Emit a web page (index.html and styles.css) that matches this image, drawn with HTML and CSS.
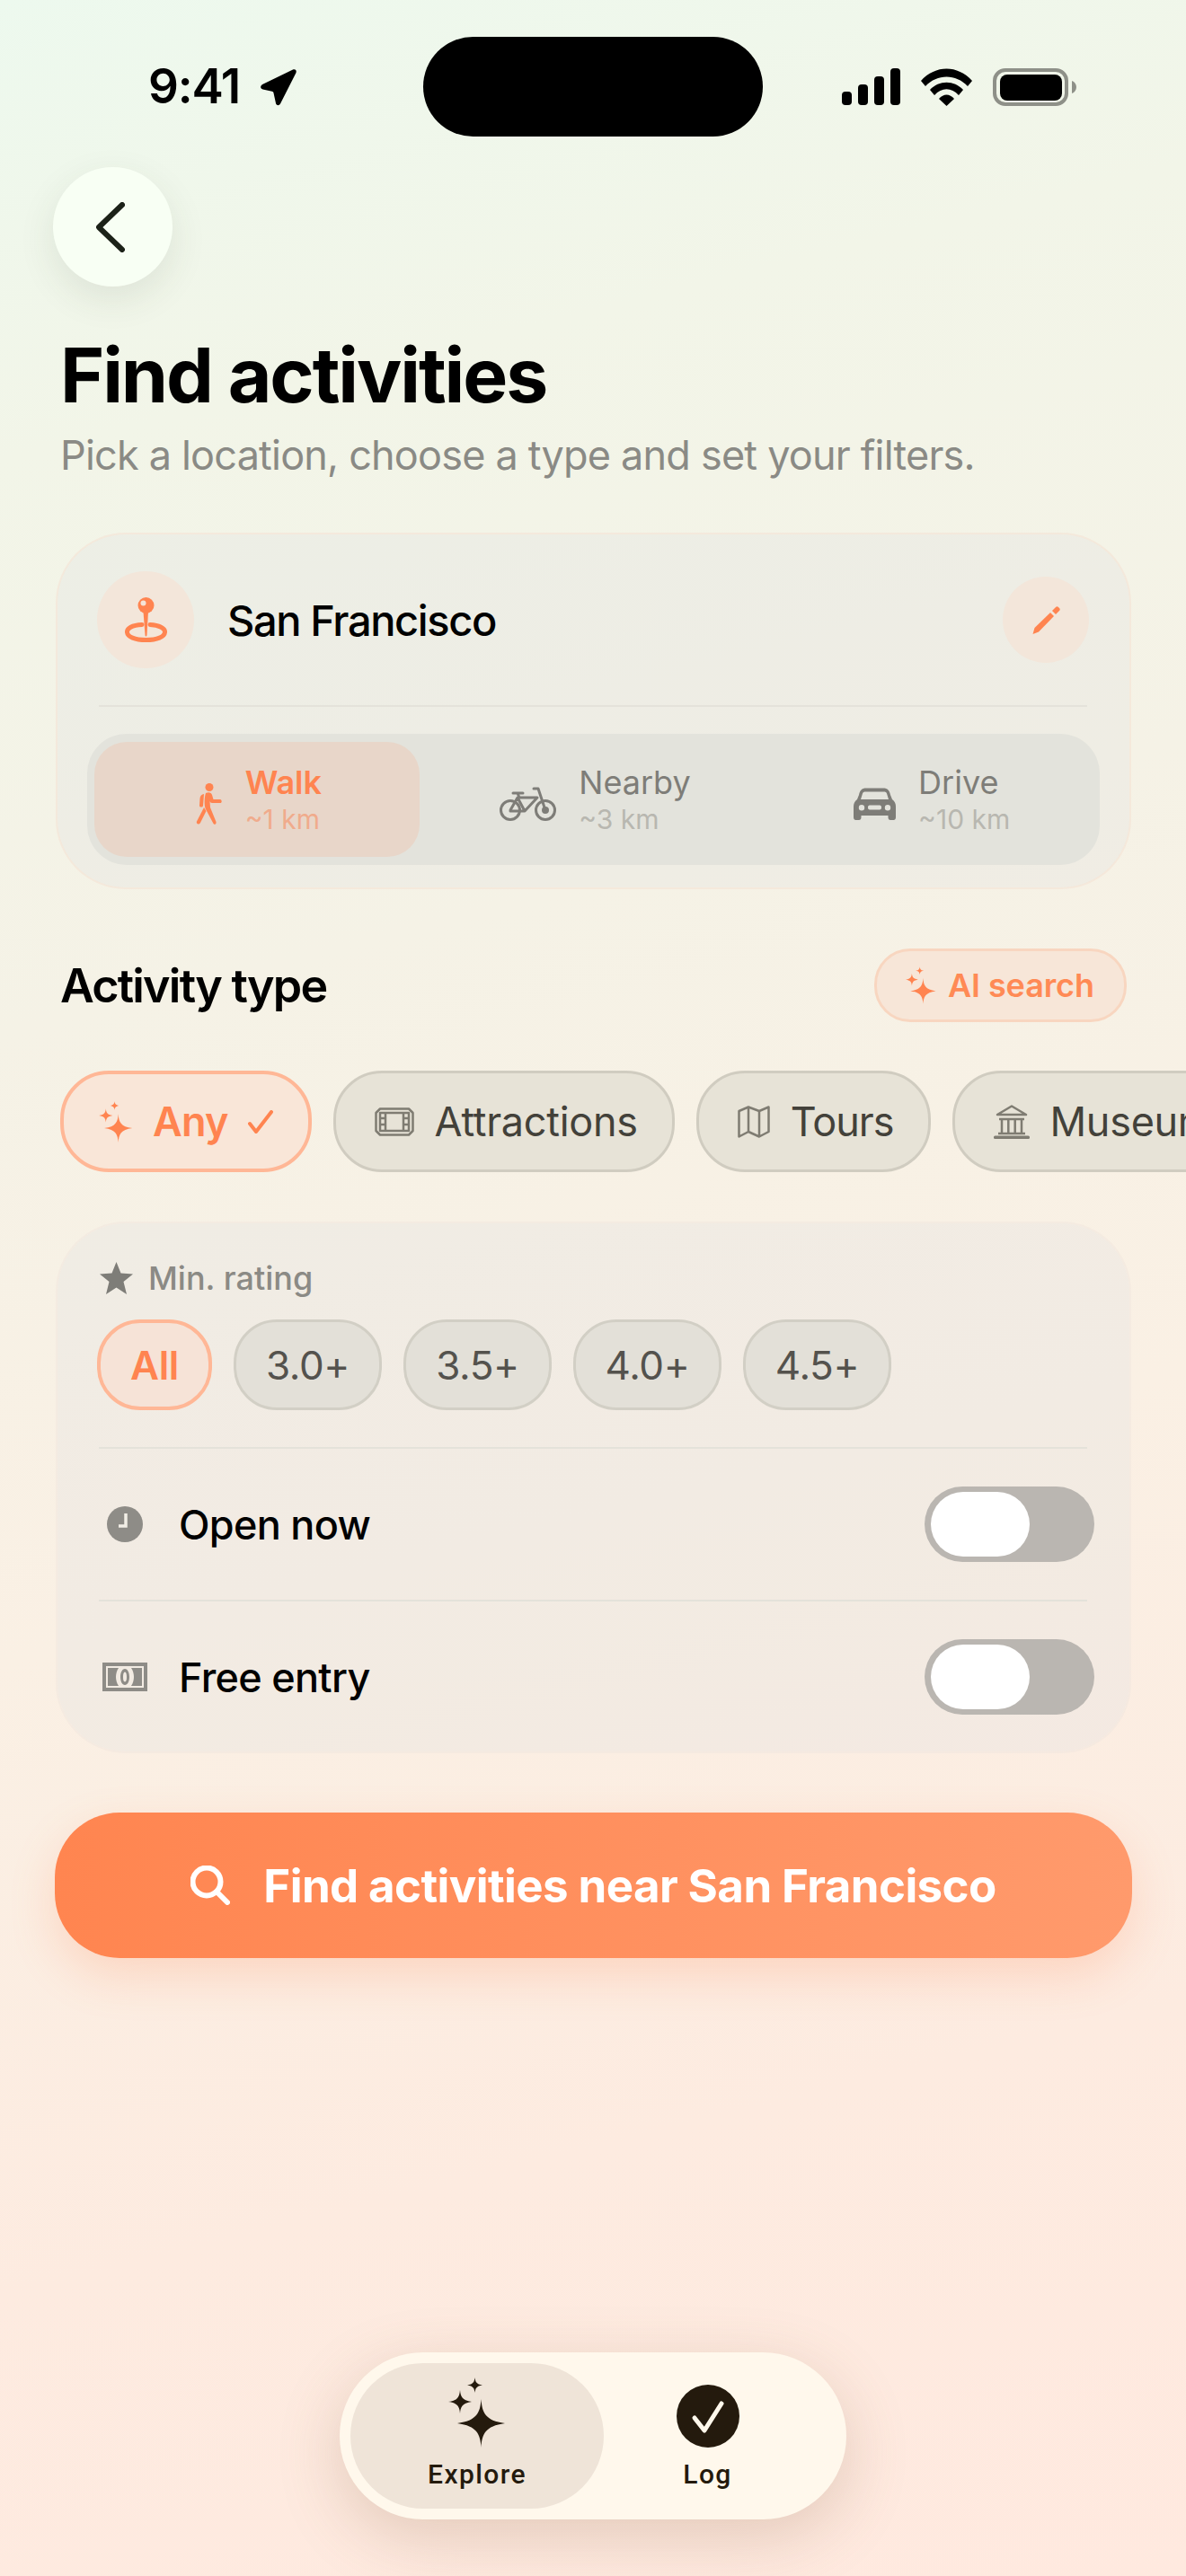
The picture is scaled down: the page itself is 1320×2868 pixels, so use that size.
FILE: index.html
```html
<!DOCTYPE html>
<html lang="en">

<head>
    <meta charset="UTF-8">
    <meta name="viewport" content="width=device-width, initial-scale=1.0">
    <title>Find activities</title>
    <link rel="stylesheet" href="styles.css">
</head>

<body>
    <!-- shared sparkle icon -->
    <svg class="defs" width="0" height="0">
        <symbol id="sparkles" viewBox="0 0 64 78">
            <path d="M36.500 24C37.500 39 41 48 63 51C41 54 37.500 63 36.500 78C35.500 63 32 54 10 51C32 48 35.500 39 36.500 24Z" />
            <path d="M13 14C13.700 21 15 25.500 26 27C15 28.500 13.700 33 13 40C12.300 33 11 28.500 0 27C11 25.500 12.300 21 13 14Z" />
            <path d="M29.500 0C30 4.500 31 7.500 38 8.500C31 9.500 30 12.500 29.500 17C29 12.500 28 9.500 21 8.500C28 7.500 29 4.500 29.500 0Z" />
        </symbol>
    </svg>

    <div class="screen">
        <div class="status-bar">
            <div class="status-left">
                <span class="time">9:41</span>
                <svg class="location-arrow" viewBox="0 0 42 42">
                    <path d="M3 18L37 1.500C39.500 .5 41.500 2.500 40.500 5L23 39.500C21.500 42 18.500 41.500 18 39L15.500 27.500C15.300 26.500 14.700 26 13.800 25.800L3.500 23.500C.5 22.800 .5 19.500 3 18Z" />
                </svg>
            </div>
            <div class="island"></div>
            <div class="status-right">
                <svg class="signal" viewBox="0 0 65 41">
                    <rect x="0" y="26" width="11" height="15" rx="4" />
                    <rect x="18" y="18" width="11" height="23" rx="4" />
                    <rect x="36" y="9" width="11" height="32" rx="4" />
                    <rect x="54" y="0" width="11" height="41" rx="4" />
                </svg>
                <svg class="wifi" viewBox="0 0 57 42">
                    <path d="M0 14C16 -4 41 -4 57 14L52 20C39 6 18 6 5 20Z" />
                    <path d="M10 24C20 13 37 13 47 24L42 30C34 21 23 21 15 30Z" />
                    <path d="M20 34C25 28 32 28 37 34L28.500 42Z" />
                </svg>
                <svg class="battery" viewBox="0 0 93 42">
                    <rect x="2" y="2" width="80" height="38" rx="12" fill="none" stroke="#8e9088" stroke-width="4" />
                    <rect x="8" y="7" width="69" height="29" rx="8" />
                    <path d="M88 14C91 15 93 18 93 21C93 24 91 27 88 28Z" fill="#8e9088" />
                </svg>
            </div>
        </div>

        <button class="back-btn">
            <svg viewBox="0 0 32 56">
                <path d="M29 3L3 28L29 53" />
            </svg>
        </button>

        <h1 class="title">Find activities</h1>
        <p class="subtitle">Pick a location, choose a type and set your filters.</p>

        <section class="card location-card">
            <div class="location-row">
                <div class="pin-circle">
                    <svg class="pin-icon" viewBox="0 0 47 50">
                        <path class="pin-ring" d="M19 30.500C8 31 2 34.500 2.500 39C3 44 11 47.500 23.500 47.500C36 47.500 44 44 44.500 39C45 34.500 38 31 28 30.500" />
                        <path d="M20.500 16H26L24.500 42C24.200 44 22.800 44 22.500 42Z" />
                        <circle cx="23.500" cy="9" r="9" />
                        <circle class="pin-hole" cx="20.500" cy="6.500" r="3" />
                    </svg>
                </div>
                <span class="location-name">San Francisco</span>
                <div class="edit-circle">
                    <svg class="edit-icon" viewBox="0 0 32 33">
                        <path d="M1.500 32L3.500 25L21 8L25 12L8 29.500Z" />
                        <path d="M23 6L27 2C28 1 29 1 30 2L31 3C32 4 32 5 31 6L27 10Z" />
                    </svg>
                </div>
            </div>
            <div class="divider"></div>
            <div class="segments">
                <div class="segment active">
                    <svg class="seg-icon walk-icon" viewBox="0 0 30 46">
                        <circle cx="15" cy="4.500" r="4.500" />
                        <path d="M11 11C14 9.500 17 10 18 13L19.500 18H27C29 18 29.500 22 27 22H18C16.500 22 16 21 15.500 20L16 27L22.500 43C23 46 20 47 19 44L11 29C9 25 9.500 15 11 11Z" />
                        <path d="M9 27L11.500 31L5 44C3 47 0 45 1 42.500Z" />
                        <path d="M9 12L8 25C7.800 27 4 27 4 25L4.500 17C4.700 14 6.500 12.500 9 12Z" />
                    </svg>
                    <div class="seg-text">
                        <span class="seg-name">Walk</span>
                        <span class="seg-dist">~1 km</span>
                    </div>
                </div>
                <div class="segment">
                    <svg class="seg-icon bike-icon" viewBox="0 0 63 38">
                        <circle cx="12" cy="26" r="10.500" />
                        <circle cx="51" cy="26" r="10.500" />
                        <path d="M12 26L20 12H42L28 27H12M20 12L28 27M38 2H43L51 26M15 7H26M20 7L22 12" />
                        <circle class="bike-hub" cx="51" cy="26" r="2.500" />
                    </svg>
                    <div class="seg-text">
                        <span class="seg-name">Nearby</span>
                        <span class="seg-dist">~3 km</span>
                    </div>
                </div>
                <div class="segment">
                    <svg class="seg-icon car-icon" viewBox="0 0 47 36">
                        <path fill-rule="evenodd" d="M6 8C7 3 9 .5 14 .5H33C38 .5 40 3 41 8L43 13C46 15 47 18 47 21V33C47 35 46 36 44.500 36H41C39.500 36 38.500 35 38.500 33V31H8.500V33C8.500 35 7.500 36 6 36H2.500C1 36 0 35 0 33V21C0 18 1 15 4 13ZM10 6.500L8 13H39L37 6.500C36.500 5 35.500 4.500 33.500 4.500H13.500C11.500 4.500 10.500 5 10 6.500ZM9 19A3.200 3.200 0 1 0 9 25.400A3.200 3.200 0 1 0 9 19ZM38 19A3.200 3.200 0 1 0 38 25.400A3.200 3.200 0 1 0 38 19ZM18 19.500C16.500 19.500 16 20.500 16 22C16 23.500 16.500 24.500 18 24.500H29C30.500 24.500 31 23.500 31 22C31 20.500 30.500 19.500 29 19.500Z" />
                    </svg>
                    <div class="seg-text">
                        <span class="seg-name">Drive</span>
                        <span class="seg-dist">~10 km</span>
                    </div>
                </div>
            </div>
        </section>

        <div class="section-head">
            <h2>Activity type</h2>
            <div class="ai-search">
                <svg class="sparkle-sm" viewBox="0 0 64 78"><use href="#sparkles" /></svg>
                <span>AI search</span>
            </div>
        </div>

        <div class="chips">
            <div class="chip active">
                <svg class="sparkle-chip" viewBox="0 0 64 78"><use href="#sparkles" /></svg>
                <span>Any</span>
                <svg class="check-sm" viewBox="0 0 28 26">
                    <path d="M2 15L9 24L26 2" />
                </svg>
            </div>
            <div class="chip">
                <svg class="chip-icon ticket" viewBox="0 0 44 32">
                    <path d="M6 1.500H38L42.500 6V26L38 30.500H6L1.500 26V6Z" />
                    <path d="M6 6H38V26H6ZM12 6V26M32 6V26M6 12H12M6 19H12M32 12H38M32 19H38" />
                </svg>
                <span>Attractions</span>
            </div>
            <div class="chip">
                <svg class="chip-icon map" viewBox="0 0 36 36">
                    <path d="M1.500 6L12 1.500L24 6L34.500 1.500V29L24 34.500L12 29L1.500 34.500ZM12 1.500V29M24 6V34.500" />
                </svg>
                <span class="tours-label">Tours</span>
            </div>
            <div class="chip">
                <svg class="chip-icon museum" viewBox="0 0 40 38">
                    <path d="M20 1.500L36 11H4Z" />
                    <path d="M6 16H34M9 16V31M16.300 16V31M23.700 16V31M31 16V31M5 32H35" />
                    <rect class="museum-base" x="0" y="34.500" width="40" height="3.500" rx="1.500" />
                </svg>
                <span>Museums</span>
            </div>
        </div>

        <section class="card filters-card">
            <div class="rating-label">
                <svg class="star-icon" viewBox="0 0 37 36">
                    <path d="M18.500 0L23.500 12.500L37 13.500L26.500 22L30 36L18.500 28.500L7 36L10.500 22L0 13.500L13.500 12.500Z" />
                </svg>
                <span>Min. rating</span>
            </div>
            <div class="rating-pills">
                <div class="pill active">All</div>
                <div class="pill">3.0+</div>
                <div class="pill">3.5+</div>
                <div class="pill">4.0+</div>
                <div class="pill">4.5+</div>
            </div>
            <div class="divider rating-divider"></div>
            <div class="filter-row">
                <div class="filter-icon">
                    <svg class="clock-icon" viewBox="0 0 40 40">
                        <circle cx="20" cy="20" r="20" />
                        <path d="M21 8V22H13" />
                    </svg>
                </div>
                <span class="filter-name">Open now</span>
                <div class="toggle"><div class="thumb"></div></div>
            </div>
            <div class="divider"></div>
            <div class="filter-row">
                <div class="filter-icon">
                    <svg class="money-icon" viewBox="0 0 50 32">
                        <path fill-rule="evenodd" d="M0 0H50V32H0ZM4 4V28H46V4Z" />
                        <path fill-rule="evenodd" d="M6 6H18C16 9 15 12.500 15 16C15 19.500 16 23 18 26H6ZM44 6H32C34 9 35 12.500 35 16C35 19.500 34 23 32 26H44Z" />
                        <path fill-rule="evenodd" d="M25 7C28 7 30 11 30 16C30 21 28 25 25 25C22 25 20 21 20 16C20 11 22 7 25 7ZM25 10.500C23.500 10.500 23 13 23 16C23 19 23.500 21.500 25 21.500C26.500 21.500 27 19 27 16C27 13 26.500 10.500 25 10.500Z" />
                    </svg>
                </div>
                <span class="filter-name">Free entry</span>
                <div class="toggle"><div class="thumb"></div></div>
            </div>
        </section>

        <button class="cta">
            <svg class="search-icon" viewBox="0 0 44 44">
                <circle cx="18" cy="18" r="15.500" />
                <path d="M30 30L41 41" />
            </svg>
            <span>Find activities near San Francisco</span>
        </button>
    </div>

    <!-- floating tab bar -->
    <nav class="tabbar">
        <div class="tab active">
            <svg class="tab-sparkle" viewBox="0 0 64 78"><use href="#sparkles" /></svg>
            <span>Explore</span>
        </div>
        <div class="tab log-tab">
            <svg class="tab-check" viewBox="0 0 70 70">
                <circle cx="35" cy="35" r="35" />
                <path d="M20 37L31 51L50 21" />
            </svg>
            <span>Log</span>
        </div>
    </nav>
</body>

</html>
```
FILE: styles.css
```css
* {
    box-sizing: border-box;
}

html,
body {
    margin: 0;
    height: 2868px;
}

body {
    position: relative;
    overflow: hidden;
    font-family: 'Inter', 'Liberation Sans', sans-serif;
    color: #000;
    background: linear-gradient(166deg, #edf9ee 0%, #f2f5e8 16%, #f5f2e6 36%, #faf0e4 58%, #fdebe0 80%, #ffe9df 100%);
}

.defs {
    position: absolute;
}

.screen {
    display: flex;
    flex-direction: column;
}

/* Status bar */
.status-bar {
    display: grid;
    grid-template-columns: 471px 378px 1fr;
    margin-top: 41px;
    height: 111px;
}

.status-left {
    display: flex;
    align-items: center;
    padding-left: 165px;
    gap: 22px;
}

.time {
    font-size: 53px;
    font-weight: 600;
    letter-spacing: -1.2px;
    line-height: 1;
}

.location-arrow {
    width: 42px;
    height: 42px;
}

.island {
    background: #000;
    border-radius: 56px;
}

.status-right {
    display: flex;
    align-items: center;
    padding-left: 88px;
    gap: 23px;
}

.signal {
    width: 65px;
    height: 41px;
}

.wifi {
    width: 57px;
    height: 42px;
}

.battery {
    width: 93px;
    height: 42px;
}

/* Header */
.back-btn {
    width: 133px;
    height: 133px;
    margin: 34px 0 0 59px;
    padding: 0;
    border: none;
    border-radius: 50%;
    background: #f8fff4;
    box-shadow: 0 14px 40px rgba(60, 70, 50, 0.1);
    display: flex;
    align-items: center;
    justify-content: center;
}

.back-btn svg {
    width: 32px;
    height: 56px;
    margin-left: -6px;
    fill: none;
    stroke: #1c2218;
    stroke-width: 6;
    stroke-linecap: round;
    stroke-linejoin: round;
}

.title {
    margin: 48px 0 0 67px;
    font-size: 84px;
    font-weight: 700;
    line-height: 102px;
    letter-spacing: -2.1px;
}

.subtitle {
    margin: 11px 0 0 67px;
    font-size: 45px;
    line-height: 54px;
    color: #8a8a85;
    letter-spacing: -0.8px;
}

/* Cards */
.card {
    width: 1197px;
    margin-left: 62px;
    border-radius: 78px;
    border: 2px solid rgba(250, 228, 210, 0.5);
    background: rgba(225, 225, 225, 0.3);
}

.divider {
    height: 2px;
    margin: 0 47px 0 46px;
    background: #e4e2da;
}

.location-card {
    margin-top: 59px;
    height: 397px;
    padding-top: 40px;
}

.location-row {
    display: flex;
    align-items: center;
    height: 110px;
    padding: 0 45px 0 44px;
}

.pin-circle {
    width: 108px;
    height: 108px;
    border-radius: 50%;
    background: #f3e6da;
    display: flex;
    align-items: center;
    justify-content: center;
}

.pin-icon {
    width: 47px;
    height: 50px;
    fill: #ff8450;
}

.pin-ring {
    fill: none;
    stroke: #ff8450;
    stroke-width: 5;
    stroke-linecap: round;
}

.pin-hole {
    fill: #f5e4d8;
}

.location-name {
    margin-left: 37px;
    font-size: 47px;
    font-weight: 500;
    letter-spacing: -1.4px;
    flex: 1;
}

.edit-circle {
    width: 96px;
    height: 96px;
    border-radius: 50%;
    background: #f3e6da;
    display: flex;
    align-items: center;
    justify-content: center;
}

.edit-icon {
    width: 32px;
    height: 33px;
    fill: #ff8450;
}

.location-card .divider {
    margin-top: 40px;
}

.segments {
    display: flex;
    gap: 13px;
    margin: 30px 33px 0 33px;
    height: 146px;
    padding: 9px 8px;
    border-radius: 44px;
    background: #e3e3dc;
}

.segment {
    flex: 1;
    display: flex;
    align-items: center;
    justify-content: center;
    gap: 25px;
    padding-left: 4px;
    border-radius: 36px;
}

.segment.active {
    background: #e8d6c9;
}

.seg-text {
    display: flex;
    flex-direction: column;
}

.seg-name {
    font-size: 36px;
    font-weight: 400;
    line-height: 44px;
    color: #7e7d78;
}

.seg-dist {
    font-size: 30px;
    line-height: 38px;
    color: #b8b7b0;
}

.segment.active .seg-name {
    font-weight: 600;
    color: #ff8450;
}

.segment.active .seg-dist {
    color: #f0ab8c;
}

.seg-icon {
    margin-top: 10px;
}

.walk-icon {
    width: 30px;
    height: 46px;
    fill: #ff8450;
}

.bike-icon {
    width: 63px;
    height: 38px;
    fill: none;
    stroke: #7e7d78;
    stroke-width: 3;
    stroke-linecap: round;
    stroke-linejoin: round;
}

.bike-hub {
    fill: #7e7d78;
}

.car-icon {
    width: 47px;
    height: 36px;
    fill: #7e7d78;
}

/* Activity type */
.section-head {
    display: flex;
    align-items: center;
    justify-content: space-between;
    margin: 66px 66px 0 67px;
}

.section-head h2 {
    margin: 0;
    font-size: 52px;
    font-weight: 600;
    letter-spacing: -1.8px;
}

.ai-search {
    display: flex;
    align-items: center;
    gap: 13px;
    width: 281px;
    height: 82px;
    padding-left: 32px;
    border-radius: 40px;
    border: 3px solid #f8d6c0;
    background: #f7e6d8;
    font-size: 36px;
    font-weight: 600;
    color: #ff8a55;
    letter-spacing: -0.1px;
}

.sparkle-sm {
    width: 34px;
    height: 42px;
    fill: #ff8450;
}

.chips {
    display: flex;
    gap: 24px;
    margin: 54px 0 0 67px;
}

.chip {
    flex-shrink: 0;
    display: flex;
    align-items: center;
    height: 113px;
    padding: 0 38px 0 43px;
    border-radius: 54px;
    border: 3px solid #d0ccc0;
    background: #e7e3d7;
    font-size: 45px;
    color: #43413a;
    letter-spacing: -0.3px;
}

.chip.active {
    padding: 0 39px 0 39px;
    border: 4px solid #ffb796;
    background: #f9e6d8;
    color: #ff8450;
    font-weight: 600;
    letter-spacing: -0.8px;
}

.tours-label {
    letter-spacing: -1px;
}

.sparkle-chip {
    width: 38px;
    height: 46px;
    margin-right: 22px;
    fill: #ff8450;
}

.check-sm {
    width: 28px;
    height: 26px;
    margin-left: 22px;
    fill: none;
    stroke: #ff8450;
    stroke-width: 4;
    stroke-linecap: round;
    stroke-linejoin: round;
}

.chip-icon {
    margin-right: 23px;
    fill: none;
    stroke: #7f7c72;
    stroke-width: 2.5;
    stroke-linejoin: round;
}

.ticket {
    width: 44px;
    height: 32px;
}

.map {
    width: 36px;
    height: 36px;
}

.museum {
    width: 40px;
    height: 38px;
}

.museum-base {
    fill: #7f7c72;
    stroke: none;
}

/* Filters */
.filters-card {
    margin-top: 55px;
    height: 592px;
    padding-top: 38px;
    border-color: rgba(250, 235, 222, 0.4);
}

.rating-label {
    display: flex;
    align-items: center;
    gap: 17px;
    height: 46px;
    padding-left: 47px;
    font-size: 36px;
    font-weight: 500;
    color: #8b8a85;
}

.star-icon {
    width: 37px;
    height: 36px;
    fill: #7e7d78;
}

.rating-pills {
    display: flex;
    gap: 24px;
    margin: 23px 0 0 44px;
}

.pill {
    width: 165px;
    height: 101px;
    display: flex;
    align-items: center;
    justify-content: center;
    border-radius: 48px;
    border: 3px solid #d2cfc5;
    background: #e3e0d8;
    font-size: 44px;
    color: #54524d;
    letter-spacing: -0.4px;
}

.pill.active {
    width: 128px;
    border: 4px solid #ffb796;
    background: #f6e3d7;
    color: #ff8450;
    font-weight: 600;
}

.rating-divider {
    margin-top: 41px;
}

.filter-row {
    display: flex;
    align-items: center;
    height: 168px;
    padding: 0 39px 0 46px;
}

.filter-icon {
    width: 58px;
    display: flex;
    justify-content: center;
    margin-right: 31px;
}

.filter-name {
    flex: 1;
    font-size: 45px;
    font-weight: 500;
    letter-spacing: -0.7px;
}

.clock-icon {
    width: 40px;
    height: 40px;
    fill: #8e8c87;
}

.clock-icon path {
    fill: none;
    stroke: #f2eee6;
    stroke-width: 3.500;
}

.money-icon {
    width: 50px;
    height: 32px;
    fill: #8e8c87;
}

.toggle {
    width: 189px;
    height: 84px;
    padding: 6px 7px;
    border-radius: 42px;
    background: #bab6b1;
}

.thumb {
    width: 110px;
    height: 72px;
    border-radius: 36px;
    background: #fff;
}

/* Main button */
.cta {
    width: 1199px;
    height: 162px;
    margin: 66px 0 0 61px;
    padding: 0;
    display: flex;
    align-items: center;
    justify-content: center;
    gap: 37px;
    border: none;
    border-radius: 72px;
    background: linear-gradient(90deg, #ff8550, #ff9a6c);
    box-shadow: 0 20px 50px rgba(255, 133, 80, 0.22);
    color: #fff;
    font-family: inherit;
    font-size: 51px;
    font-weight: 700;
    letter-spacing: -0.6px;
}

.search-icon {
    width: 44px;
    height: 44px;
    fill: none;
    stroke: #fff;
    stroke-width: 6;
    stroke-linecap: round;
}

/* Tab bar */
.tabbar {
    position: absolute;
    left: 378px;
    bottom: 63px;
    width: 564px;
    height: 186px;
    display: flex;
    padding: 12px;
    border-radius: 93px;
    background: #fff8ec;
    box-shadow: 0 20px 70px rgba(130, 90, 60, 0.22);
}

.tab {
    flex: none;
    width: 282px;
    display: flex;
    flex-direction: column;
    align-items: center;
    justify-content: flex-end;
    padding-bottom: 21px;
    border-radius: 81px;
    font-family: 'Roboto', sans-serif;
    font-size: 30px;
    font-weight: 500;
    letter-spacing: 1.4px;
    color: #241a0d;
}

.tab.active {
    background: #efe4d8;
}

.log-tab {
    width: 231px;
}

.tab-sparkle {
    width: 64px;
    height: 78px;
    margin-bottom: 12px;
    fill: #241a0d;
}

.tab-check {
    width: 70px;
    height: 70px;
    margin-bottom: 12px;
}

.tab-check circle {
    fill: #241a0d;
}

.tab-check path {
    fill: none;
    stroke: #fff8ec;
    stroke-width: 5;
    stroke-linecap: round;
    stroke-linejoin: round;
}
```
